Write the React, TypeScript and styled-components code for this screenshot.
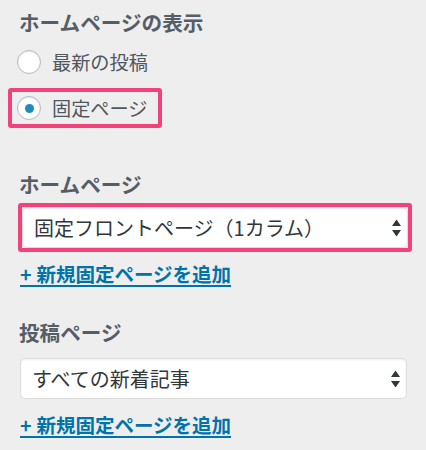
import React from "react";
import styled, { createGlobalStyle } from "styled-components";

const Global = createGlobalStyle`
  html, body {
    margin: 0;
    padding: 0;
    background: #eeeeee;
  }
  body {
    font-family: "Noto Sans CJK JP", "Noto Sans", sans-serif;
    -webkit-font-smoothing: antialiased;
  }
`;

const Panel = styled.div`
  display: flex;
  flex-direction: column;
  align-items: flex-start;
  padding: 8px 19px 14px 20px;
  box-sizing: border-box;
  width: 426px;
`;

const Heading = styled.h3<{ $mt?: number }>`
  margin: ${(p) => p.$mt ?? 0}px 0 0 -1px;
  font-size: 20.6px;
  line-height: 28px;
  font-weight: 700;
  color: #555d66;
`;

const RadioRow = styled.label<{ $highlight?: boolean; $mt?: number }>`
  display: flex;
  align-items: center;
  gap: 11px;
  height: 40px;
  box-sizing: border-box;
  margin: ${(p) => p.$mt ?? 0}px 0 0 -12px;
  padding: 0 10px 0 5px;
  border: 4px solid ${(p) => (p.$highlight ? "#f1437b" : "transparent")};
  border-radius: 3px;
  font-size: 19.2px;
  color: #50575e;
  cursor: pointer;
`;

const Radio = styled.input.attrs({ type: "radio" })`
  appearance: none;
  -webkit-appearance: none;
  margin: 0;
  width: 24px;
  height: 24px;
  border-radius: 50%;
  border: 1px solid #b4b9be;
  background: #fff;
  box-shadow: inset 0 1px 2px rgba(0, 0, 0, 0.1);
  display: flex;
  align-items: center;
  justify-content: center;
  box-sizing: border-box;
  flex: none;
  &:checked::before {
    content: "";
    width: 9px;
    height: 9px;
    border-radius: 50%;
    background: #1e8cbe;
  }
`;

const SelectFrame = styled.div<{ $highlight?: boolean; $mt?: number }>`
  align-self: stretch;
  margin: ${(p) => p.$mt ?? 0}px ${(p) => (p.$highlight ? -5 : 0)}px 0
    ${(p) => (p.$highlight ? -2 : 0)}px;
  border: ${(p) => (p.$highlight ? "4px solid #f1437b" : "none")};
  border-radius: 3px;
  position: relative;
`;

const Select = styled.select`
  appearance: none;
  -webkit-appearance: none;
  display: block;
  width: 100%;
  height: 41px;
  margin: 0;
  box-sizing: border-box;
  padding: 0 30px 0 11px;
  border: 1px solid #dddddd;
  border-radius: 5px;
  background: #ffffff;
  box-shadow: inset 0 1px 2px rgba(0, 0, 0, 0.07);
  font-family: "Noto Sans CJK JP", "Noto Sans", sans-serif;
  font-size: 20px;
  color: #32373c;
  outline: none;
`;

const Arrows = styled.svg`
  position: absolute;
  right: 7px;
  top: 50%;
  transform: translateY(-50%);
  pointer-events: none;
`;

const AddLink = styled.a<{ $mt?: number }>`
  margin-top: ${(p) => p.$mt ?? 0}px;
  font-size: 19.5px;
  line-height: 26px;
  font-weight: 700;
  word-spacing: 0.5px;
  color: #0073aa;
  text-decoration: underline;
  text-decoration-thickness: 2px;
  text-underline-offset: 3px;
`;

const SelectArrows = () => (
  <Arrows width="9" height="17" viewBox="0 0 9 17">
    <polygon points="0,6.5 4.5,0 9,6.5" fill="#32373c" />
    <polygon points="0,10.5 4.5,17 9,10.5" fill="#32373c" />
  </Arrows>
);

export default function App() {
  return (
    <>
      <Global />
      <Panel>
        <Heading>ホームページの表示</Heading>
        <RadioRow $mt={6}>
          <Radio name="front" />
          最新の投稿
        </RadioRow>
        <RadioRow $highlight $mt={6}>
          <Radio name="front" defaultChecked />
          固定ページ
        </RadioRow>

        <Heading $mt={42}>ホームページ</Heading>
        <SelectFrame $highlight $mt={5}>
          <Select defaultValue="front">
            <option value="front">固定フロントページ（1カラム）</option>
          </Select>
          <SelectArrows />
        </SelectFrame>
        <AddLink href="#" $mt={9}>+ 新規固定ページを追加</AddLink>

        <Heading $mt={31}>投稿ページ</Heading>
        <SelectFrame $mt={12}>
          <Select defaultValue="all">
            <option value="all">すべての新着記事</option>
          </Select>
          <SelectArrows />
        </SelectFrame>
        <AddLink href="#" $mt={13}>+ 新規固定ページを追加</AddLink>
      </Panel>
    </>
  );
}
